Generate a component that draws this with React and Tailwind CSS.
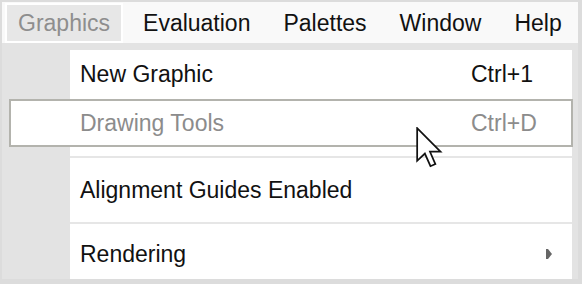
const menus = ['Graphics', 'Evaluation', 'Palettes', 'Window', 'Help'];

function Cursor() {
  return (
    <svg width="28" height="42" viewBox="0 0 12 18" className="absolute left-[416px] top-[127px]">
      <path
        d="M0.5 0.5 L0.5 14.5 L3.8 11.4 L6.2 16.8 L8.3 15.9 L6 10.6 L10.5 10.6 Z"
        fill="#fff"
        stroke="#111"
        strokeWidth="0.75"
        strokeLinejoin="miter"
      />
    </svg>
  );
}

export default function App() {
  return (
    <div
      className="relative w-[582px] h-[284px] overflow-hidden bg-[#dcdcdc] pt-[2px] pl-[2px]"
      style={{ fontFamily: '"Liberation Sans", Arial, sans-serif' }}
    >
      <div className="w-[576px] h-[277px] bg-[#e3e3e3] flex flex-col">
        {/* Menu bar */}
        <div className="h-[41px] bg-[#f9f9f9] flex items-stretch pt-[1px] pl-[3px] gap-[7px] text-[23px] text-[#111]">
          {menus.map((m, i) => (
            <div
              key={m}
              className={
                i === 0
                  ? 'px-[11px] flex items-center bg-[#e7e7e7] border-2 border-white text-[#8e8e8e]'
                  : 'px-[13px] flex items-center'
              }
            >
              {m}
            </div>
          ))}
        </div>

        {/* Dropdown */}
        <div className="flex mt-[7px] flex-1">
          <div className="w-[68px]" />
          <div className="w-[502px] bg-white flex flex-col text-[23px] text-[#111]">
            <div className="h-[49px] flex items-center pl-[10px]">
              <span className="w-[391px]">New Graphic</span>
              <span>Ctrl+1</span>
            </div>
            <div className="h-[48px] -ml-[61px] mr-[-1px] border-2 border-[#b3b3ad] bg-white flex items-center pl-[69px] text-[#8c8c8c]">
              <span className="w-[391px]">Drawing Tools</span>
              <span>Ctrl+D</span>
            </div>
            <div className="h-[9px]" />
            <div className="h-[2px] bg-[#e6e6e6]" />
            <div className="h-[64px] flex items-center pl-[10px]">Alignment Guides Enabled</div>
            <div className="h-[2px] bg-[#e6e6e6]" />
            <div className="flex-1 flex items-center pl-[10px] pt-[5px]">
              <span className="w-[466px]">Rendering</span>
              <svg width="6" height="10" viewBox="0 0 6 10">
                <path d="M0 0 L2 0 L6 5 L2 10 L0 10 Z" fill="#666" />
              </svg>
            </div>
          </div>
        </div>
      </div>
      <Cursor />
    </div>
  );
}
